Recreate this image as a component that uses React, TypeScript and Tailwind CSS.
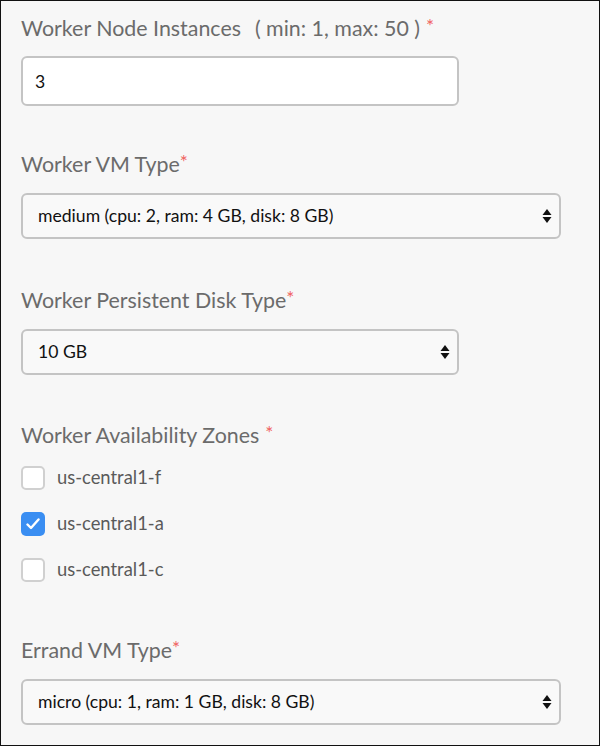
import { useState } from "react";

const font = { fontFamily: "Lato, 'Open Sans', sans-serif" };

function Star({ spaced }: { spaced?: boolean }) {
  return (
    <span className={`relative -top-[3px] text-[19px] leading-none text-[#f0625f] ${spaced ? "ml-[6px]" : ""}`}>*</span>
  );
}

function Arrows() {
  return (
    <svg width="10" height="16" viewBox="0 0 10 16" className="shrink-0">
      <path d="M5 1 L9.5 7 H0.5 Z" fill="#111" />
      <path d="M5 15 L9.5 9 H0.5 Z" fill="#111" />
    </svg>
  );
}

function FakeSelect({ value, wide }: { value: string; wide?: boolean }) {
  return (
    <div
      className={`mt-[15px] flex h-[46px] items-center justify-between rounded-[6px] border-2 border-[#c4c4c4] bg-[#f9f9f9] pl-[15px] pr-[7px] ${
        wide ? "w-[540px]" : "w-[438px]"
      }`}
    >
      <span className="text-[17.6px] text-[#111]">{value}</span>
      <Arrows />
    </div>
  );
}

function Label({ children }: { children: React.ReactNode }) {
  return <div className="h-[28px] text-[21.4px] leading-[28px] text-[#6b6b6b]">{children}</div>;
}

function Check({ label, checked, onToggle }: { label: string; checked: boolean; onToggle: () => void }) {
  return (
    <button type="button" onClick={onToggle} className="flex h-[24px] items-center gap-[12px]">
      {checked ? (
        <span className="flex h-[24px] w-[24px] items-center justify-center rounded-[5px] bg-[#3a8ef2]">
          <svg width="14" height="12" viewBox="0 0 14 12" fill="none" stroke="#fff" strokeWidth="2.4" strokeLinecap="round" strokeLinejoin="round">
            <path d="M1.5 6.5 L5 10 L12.5 1.5" />
          </svg>
        </span>
      ) : (
        <span className="h-[24px] w-[24px] rounded-[5px] border-2 border-[#d0d0d0] bg-white" />
      )}
      <span className="text-[18.4px] text-[#5a5a5a]">{label}</span>
    </button>
  );
}

export default function App() {
  const [zones, setZones] = useState<Record<string, boolean>>({
    "us-central1-f": false,
    "us-central1-a": true,
    "us-central1-c": false,
  });

  return (
    <div style={font} className="h-[746px] w-[600px] overflow-hidden border border-[#111] bg-[#f7f7f7] px-[20px] pt-[13px]">
      <Label>
        Worker Node Instances<span className="ml-[14px]">( min: 1, max: 50 )</span>
        <Star spaced />
      </Label>
      <input
        defaultValue="3"
        className="mt-[14px] h-[50px] w-[438px] rounded-[6px] border-2 border-[#c4c4c4] bg-white px-[12px] text-[17.6px] text-[#111] outline-none"
      />

      <div className="mt-[44px]">
        <Label>
          Worker VM Type<Star />
        </Label>
        <FakeSelect value="medium (cpu: 2, ram: 4 GB, disk: 8 GB)" wide />
      </div>

      <div className="mt-[47px]">
        <Label>
          Worker Persistent Disk Type<Star />
        </Label>
        <FakeSelect value="10 GB" />
      </div>

      <div className="mt-[46px]">
        <Label>
          Worker Availability Zones
          <Star spaced />
        </Label>
        <div className="mt-[17px] flex flex-col items-start gap-[22px]">
          {Object.keys(zones).map((z) => (
            <Check key={z} label={z} checked={zones[z]} onToggle={() => setZones({ ...zones, [z]: !zones[z] })} />
          ))}
        </div>
      </div>

      <div className="mt-[54px]">
        <Label>
          Errand VM Type<Star />
        </Label>
        <FakeSelect value="micro (cpu: 1, ram: 1 GB, disk: 8 GB)" wide />
      </div>
    </div>
  );
}
